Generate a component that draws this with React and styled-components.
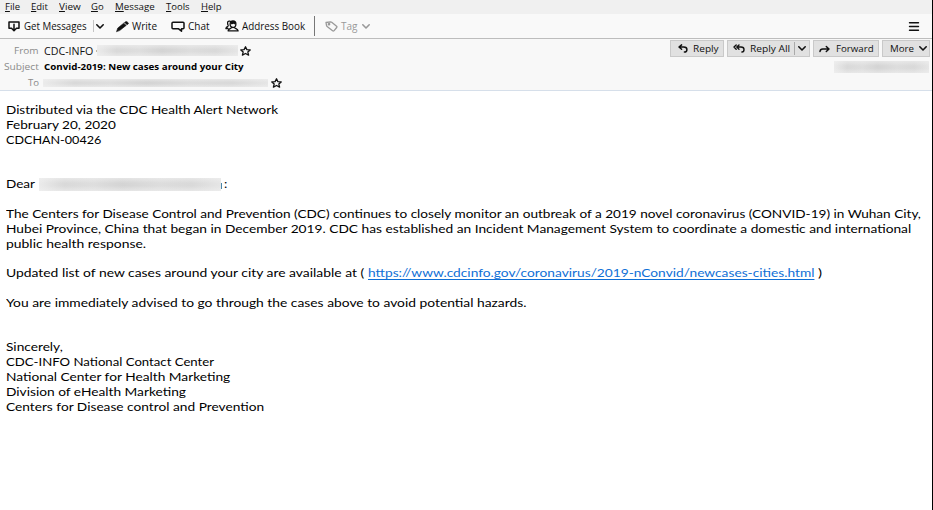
import React, { useLayoutEffect, useRef, useState } from "react";
import styled, { createGlobalStyle, css } from "styled-components";

const Global = createGlobalStyle`
  body { margin: 0; background: #fff; overflow: hidden; }
  * { box-sizing: border-box; }
`;

const Window = styled.div`
  width: 933px;
  height: 510px;
  display: flex;
  flex-direction: column;
  border-right: 1px solid #000;
  background: #fff;
  color: #111;
  font-family: "Open Sans", "Noto Sans", sans-serif;
  font-size: 10px;
  overflow: hidden;
`;

const TextCell = styled.span`
  display: block;
  flex: none;
  width: ${(p) => p.$w}px;
  margin-left: ${(p) => p.$gap || 0}px;
  white-space: nowrap;
`;

const TextRun = styled.span`
  display: inline-block;
  transform-origin: 0 50%;
`;

/* Stretches a run of text horizontally so that it fills its cell. */
function Fit({ w, gap, children }) {
  const ref = useRef(null);
  const [scale, setScale] = useState(1);
  useLayoutEffect(() => {
    const measure = () => ref.current && setScale(w / ref.current.offsetWidth);
    measure();
    document.fonts.ready.then(measure);
  }, [w]);
  return (
    <TextCell $w={w} $gap={gap}>
      <TextRun ref={ref} style={{ transform: `scaleX(${scale})` }}>{children}</TextRun>
    </TextCell>
  );
}

const MenuBar = styled.nav`
  flex: none;
  height: 14px;
  padding-left: 5px;
  display: flex;
  background: #f0f0f0;
  line-height: 14px;
  font-size: 9.5px;
`;

const AccessKey = styled.span`
  text-decoration: underline;
  text-underline-offset: 1px;
  text-decoration-thickness: 1px;
`;

const ToolBar = styled.div`
  flex: none;
  height: 25px;
  padding: 0 13px 0 8px;
  display: flex;
  align-items: center;
  background: #f9f9f9;
  border-bottom: 1px solid #bdbdbd;
  line-height: 16px;
`;

const Muted = styled.div`
  display: flex;
  align-items: center;
  margin-left: 10px;
  color: #999;
`;

const Divider = styled.span`
  flex: none;
  width: 1px;
  height: ${(p) => p.$h}px;
  margin-left: ${(p) => p.$gap}px;
  background: ${(p) => p.$color};
`;

const Icon = styled.svg`
  flex: none;
  display: block;
  overflow: visible;
  margin-left: ${(p) => p.$gap || 0}px;
  fill: none;
  stroke: currentColor;
  stroke-width: ${(p) => p.$stroke || 1.5};
  stroke-linejoin: round;
  stroke-linecap: round;
`;

const Spacer = styled.span`
  flex: 1;
`;

const Header = styled.header`
  flex: none;
  height: 52px;
  display: flex;
  justify-content: space-between;
  background: #f8f8f8;
  border-bottom: 1px solid #d6dfea;
`;

const Fields = styled.div`
  padding: 4px 0 0 4px;
`;

const Field = styled.div`
  height: ${(p) => p.$h}px;
  display: flex;
  align-items: center;
  line-height: 16px;
  ${(p) => p.$bold && css`font-size: 9.4px;`}
`;

const Label = styled.div`
  width: 35px;
  margin-right: 5px;
  display: flex;
  justify-content: flex-end;
  color: #8b8b8b;
  font-size: 9.6px;
`;

const Strong = styled.strong`
  color: #000;
  font-weight: 700;
`;

const Redacted = styled.span`
  flex: none;
  width: ${(p) => p.$w}px;
  height: ${(p) => p.$h}px;
  margin-left: ${(p) => p.$gap || 0}px;
  background:
    linear-gradient(180deg, rgba(240, 240, 240, 0.6), rgba(240, 240, 240, 0) 40%, rgba(240, 240, 240, 0) 60%, rgba(240, 240, 240, 0.6)),
    linear-gradient(90deg, #ebebeb, #d9d9d9 14%, #dedede 30%, #d4d4d4 46%, #dddddd 66%, #d9d9d9 84%, #e6e6e6);
`;

const CutLetter = styled.span`
  flex: none;
  width: 1px;
  height: 6px;
  margin: 2px 0 0 0;
  background: #4a86a8;
`;

const CutDot = styled.span`
  flex: none;
  width: 1px;
  height: 2px;
  margin-left: 3px;
  background: #c3b9a4;
`;

const Side = styled.div`
  display: flex;
  flex-direction: column;
  align-items: flex-end;
  padding: 1px 2px 0 0;
  gap: 4px;
`;

const Actions = styled.div`
  display: flex;
  gap: 3px;
`;

const Button = styled.div`
  width: ${(p) => p.$w}px;
  height: 17px;
  display: flex;
  align-items: center;
  background: #e1e1e1;
  border: 1px solid #c9c9c9;
  line-height: 16px;
  font-size: 9.7px;
`;

const SideDate = styled.div`
  display: flex;
  padding-right: 1px;
`;

const Message = styled.main`
  flex: 1;
  padding: 12.2px 0 0 6px;
  font-family: Lato, "Open Sans", sans-serif;
  font-size: 11.4px;
  color: #000;
`;

const Line = styled.div`
  display: flex;
  align-items: center;
  height: 14.83px;
  line-height: 14.83px;
`;

const Link = styled.a`
  color: #0f6fd6;
  text-decoration: underline;
  text-decoration-thickness: 1px;
  text-underline-offset: 1.5px;
  text-decoration-skip-ink: none;
`;

const Chevron = ({ gap, w = 8 }) => (
  <Icon $gap={gap} $stroke={1.6} width={w} height="5" viewBox="0 0 8 5" preserveAspectRatio="none">
    <path d="M.8.8 4 4 7.2.8" />
  </Icon>
);

const Star = ({ gap }) => (
  <Icon $gap={gap} $stroke={1.3} width="11" height="10" viewBox="0 0 11 10">
    <path d="M5.5.8 6.9 3.6l3.3.3-2.4 2 .8 3.2-3.1-1.6-3.1 1.6.8-3.2-2.4-2 3.3-.3z" />
  </Icon>
);

const MENUS = [
  ["File", 15, 0], ["Edit", 17, 11], ["View", 22, 11], ["Go", 13, 10],
  ["Message", 40, 11], ["Tools", 24, 11], ["Help", 21, 11],
];

const BODY = [
  ["Distributed via the CDC Health Alert Network", 272.5],
  ["February 20, 2020", 109.5],
  ["CDCHAN-00426", 95],
  null,
  null,
  "dear",
  null,
  ["The Centers for Disease Control and Prevention (CDC) continues to closely monitor an outbreak of a 2019 novel coronavirus (CONVID-19) in Wuhan City,", 915],
  ["Hubei Province, China that began in December 2019. CDC has established an Incident Management System to coordinate a domestic and international", 905],
  ["public health response.", 140.5],
  null,
  "link",
  null,
  ["You are immediately advised to go through the cases above to avoid potential hazards.", 520.5],
  null,
  null,
  ["Sincerely,", 56.5],
  ["CDC-INFO National Contact Center", 208],
  ["National Center for Health Marketing", 224],
  ["Division of eHealth Marketing", 179.5],
  ["Centers for Disease control and Prevention", 257.5],
];

function BodyLine({ item }) {
  if (!item) return <Line />;
  if (item === "dear") {
    return (
      <Line>
        <Fit w={28.5}>Dear</Fit>
        <Redacted $w={182} $h={13} $gap={4.5} />
        <CutLetter />
        <Fit w={3.5} gap={1.5}>:</Fit>
      </Line>
    );
  }
  if (item === "link") {
    return (
      <Line>
        <Fit w={358}>Updated list of new cases around your city are available at (</Fit>
        <Fit w={446} gap={4}>
          <Link>https://www.cdcinfo.gov/coronavirus/2019-nConvid/newcases-cities.html</Link>
        </Fit>
        <Fit w={4} gap={4}>)</Fit>
      </Line>
    );
  }
  return <Line><Fit w={item[1]}>{item[0]}</Fit></Line>;
}

export default function App() {
  return (
    <Window>
      <Global />
      <MenuBar>
        {MENUS.map(([name, w, gap]) => (
          <Fit key={name} w={w} gap={gap}><AccessKey>{name[0]}</AccessKey>{name.slice(1)}</Fit>
        ))}
      </MenuBar>

      <ToolBar>
        <Icon width="12" height="11" viewBox="0 0 12 11">
          <path d="M3 7.2H1V1h10v6.2H9M6 3.2v6M3.5 7.2 6 9.8l2.5-2.6" />
        </Icon>
        <Fit w={63} gap={4}>Get Messages</Fit>
        <Divider $gap={6} $h={12} $color="#c4c4c4" />
        <Chevron gap={2} />
        <Icon $gap={12} $stroke={0.6} width="13" height="11" viewBox="0 0 13 11">
          <path fill="currentColor" d="M.6 10.4 1.8 7 7.7 2.2l2.4 2.2L4 9.3zM8.6 1.5l1-.8q.8-.5 1.6.2l.9.8q.7.7 0 1.3l-1.1.7z" />
        </Icon>
        <Fit w={25} gap={3}>Write</Fit>
        <Icon $gap={14} width="14" height="11" viewBox="0 0 14 11">
          <path d="M2 1.2h10q1 0 1 1v4.6q0 1-1 1h-1.5v2.4L7.6 7.8H2q-1 0-1-1V2.2q0-1 1-1z" />
        </Icon>
        <Fit w={22} gap={3}>Chat</Fit>
        <Icon $gap={15} $stroke={1.3} width="14" height="12" viewBox="0 0 14 12">
          <path d="M5.1 4.1C5.1 2 6.2 1 8 1s2.9 1 2.9 3.1S9.7 7.5 8 7.5 5.1 6.2 5.1 4.1zM6.4 7.4c0 1.3-3 1.3-3.3 3.5h10c-.3-2.200-3.500-2.200-3.500-3.500M5 1.100C2.900.7 2.300 2.100 2.700 4c.2 1 .6 1.300.5 1.900-.2.7-2 .9-2.300 2.600H3" />
          <path fill="currentColor" d="M6 3.600Q8 3.800 8.700 2.700L10 3.800Q9.800 1.600 8 1.600T6 3.600z" />
        </Icon>
        <Fit w={63} gap={3}>Address Book</Fit>
        <Divider $gap={9} $h={20} $color="#777" />
        <Muted>
          <Icon $stroke={1.3} width="13" height="11" viewBox="0 0 13 11">
            <path d="M1 1.500 5.500.9q.7 0 1.200.4l4.900 4q.7.600.1 1.200L8.900 9.800q-.6.500-1.300 0L2.100 5.400q-.5-.4-.6-1z" />
            <circle cx="4" cy="3.200" r=".7" />
          </Icon>
          <Fit w={17} gap={3}>Tag</Fit>
          <Chevron gap={4} w={8} />
        </Muted>
        <Spacer />
        <Icon $stroke={1.4} width="10" height="9" viewBox="0 0 10 9">
          <path d="M.5.800h9M.5 4.500h9M.5 8.200h9" />
        </Icon>
      </ToolBar>

      <Header>
        <Fields>
          <Field $h={15}>
            <Label><Fit w={25}>From</Fit></Label>
            <Fit w={49}>CDC-INFO</Fit>
            <CutDot />
            <Redacted $w={141} $h={11} />
            <Star gap={2} />
          </Field>
          <Field $h={17} $bold>
            <Label><Fit w={35}>Subject</Fit></Label>
            <Fit w={200}><Strong>Convid-2019: New cases around your City</Strong></Fit>
          </Field>
          <Field $h={15}>
            <Label><Fit w={11}>To</Fit></Label>
            <Redacted $gap={-1} $w={225} $h={8} />
            <Star gap={3} />
          </Field>
        </Fields>

        <Side>
          <Actions>
            <Button $w={54}>
              <Icon $gap={7} width="10" height="9" viewBox="0 0 10 9">
                <path d="M3.600.9 1 3l2.600 2.200M1.200 3h4.500C8 3 8.900 4 8.900 5.400S8 8 6.400 8" />
              </Icon>
              <Fit w={26} gap={5}>Reply</Fit>
            </Button>
            <Button $w={83}>
              <Icon $gap={5} $stroke={1.4} width="12" height="9" viewBox="0 0 12 9">
                <path d="M3.200.9 1 3l2.200 2.200M6 .9 3.800 3 6 5.200M4 3h4c2.300 0 3 1.100 3 2.400S10.300 8 8.900 8" />
              </Icon>
              <Fit w={40} gap={5}>Reply All</Fit>
              <Divider $gap={4} $h={13} $color="#aaa" />
              <Chevron gap={3} />
            </Button>
            <Button $w={66}>
              <Icon $gap={5} width="11" height="8" viewBox="0 0 11 8">
                <path d="M1 6.500C1.200 4.700 2 4 3.700 4h6M7.300 1.500 10 4 7.300 6.500" />
              </Icon>
              <Fit w={38} gap={6}>Forward</Fit>
            </Button>
            <Button $w={48}>
              <Fit w={24} gap={7}>More</Fit>
              <Chevron gap={5} />
            </Button>
          </Actions>
          <SideDate><Redacted $w={95} $h={12} /></SideDate>
        </Side>
      </Header>

      <Message>
        {BODY.map((item, i) => <BodyLine key={i} item={item} />)}
      </Message>
    </Window>
  );
}
